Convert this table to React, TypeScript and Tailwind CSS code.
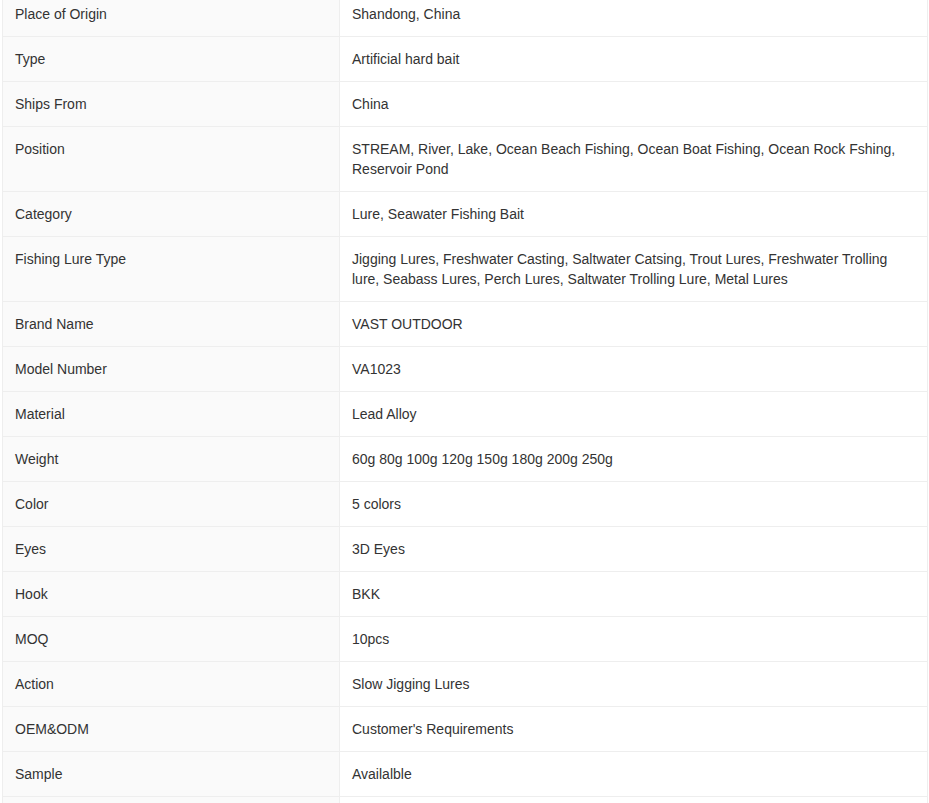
const specs: Array<[string, string]> = [
  ['Place of Origin', 'Shandong, China'],
  ['Type', 'Artificial hard bait'],
  ['Ships From', 'China'],
  [
    'Position',
    'STREAM, River, Lake, Ocean Beach Fishing, Ocean Boat Fishing, Ocean Rock Fshing, Reservoir Pond',
  ],
  ['Category', 'Lure, Seawater Fishing Bait'],
  [
    'Fishing Lure Type',
    'Jigging Lures, Freshwater Casting, Saltwater Catsing, Trout Lures, Freshwater Trolling lure, Seabass Lures, Perch Lures, Saltwater Trolling Lure, Metal Lures',
  ],
  ['Brand Name', 'VAST OUTDOOR'],
  ['Model Number', 'VA1023'],
  ['Material', 'Lead Alloy'],
  ['Weight', '60g 80g 100g 120g 150g 180g 200g 250g'],
  ['Color', '5 colors'],
  ['Eyes', '3D Eyes'],
  ['Hook', 'BKK'],
  ['MOQ', '10pcs'],
  ['Action', 'Slow Jigging Lures'],
  ['OEM&ODM', "Customer's Requirements"],
  ['Sample', 'Availalble'],
]

export default function App() {
  return (
    <div className="h-[803px] overflow-hidden bg-white font-['Liberation_Sans',Arial,sans-serif] text-[14px] leading-5 text-[#333]">
      <table className="-mt-[9px] ml-[2px] w-[926px] table-fixed border-collapse">
        <colgroup>
          <col className="w-[337px]" />
          <col />
        </colgroup>
        <tbody>
          {specs.map(([label, value]) => (
            <tr key={label}>
              <td className="border border-[#eeeeee] bg-[#fafafa] px-3 py-3 align-top">
                {label}
              </td>
              <td className="border border-[#eeeeee] bg-white px-3 py-3 align-top">
                {value}
              </td>
            </tr>
          ))}
          {/* next row continues below the fold */}
          <tr>
            <td className="h-11 border border-[#eeeeee] bg-[#fafafa]" />
            <td className="h-11 border border-[#eeeeee] bg-white" />
          </tr>
        </tbody>
      </table>
    </div>
  )
}
